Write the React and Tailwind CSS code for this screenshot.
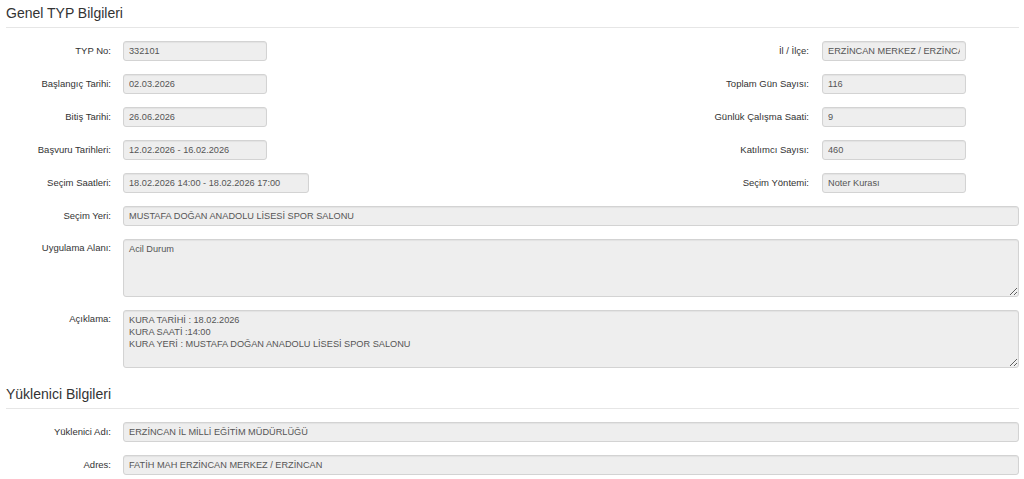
const fieldCls =
  "h-[20px] px-[5px] text-[9.2px] text-[#555] bg-[#eeeeee] border border-[#d3d3d3] rounded-[3px] outline-none shadow-[inset_0_1px_1px_rgba(0,0,0,0.05)]";

function Label({ children, wide, className = "" }) {
  return (
    <label
      className={
        (wide ? "w-[150px]" : "w-[105px]") +
        " shrink-0 text-right text-[9.5px] text-[#333] " +
        className
      }
    >
      {children}
    </label>
  );
}

function Field({ value, width }) {
  return <input readOnly value={value} className={fieldCls + " " + width} />;
}

function PairRow({ left, right }) {
  return (
    <div className="flex items-center">
      <div className="flex items-center gap-[12px]">
        <Label>{left[0]}</Label>
        <Field value={left[1]} width={left[2] || "w-[144px]"} />
      </div>
      <div className="ml-auto mr-[53px] flex items-center gap-[13px]">
        <Label wide>{right[0]}</Label>
        <Field value={right[1]} width="w-[144px]" />
      </div>
    </div>
  );
}

function FullRow({ label, value }) {
  return (
    <div className="flex items-center gap-[12px]">
      <Label>{label}</Label>
      <Field value={value} width="flex-1 min-w-0" />
    </div>
  );
}

function AreaRow({ label, value, h }) {
  return (
    <div className="flex items-start gap-[12px]">
      <Label className="pt-[2px]">{label}</Label>
      <textarea
        readOnly
        value={value}
        className={
          "flex-1 min-w-0 px-[5px] pt-[3px] text-[9.2px] leading-[12px] text-[#555] bg-[#eeeeee] border border-[#d3d3d3] rounded-[3px] outline-none resize-y shadow-[inset_0_1px_1px_rgba(0,0,0,0.05)] " +
          h
        }
      />
    </div>
  );
}

function Heading({ children }) {
  return (
    <h2 className="pt-[5px] pb-[5px] text-[14px] leading-[17px] font-normal text-[#333] border-b border-[#e6e6e6]">
      {children}
    </h2>
  );
}

export default function App() {
  return (
    <div
      className="min-h-screen bg-white pl-[6px] pr-[5px]"
      style={{ fontFamily: '"Liberation Sans", Arial, sans-serif' }}
    >
      <Heading>Genel TYP Bilgileri</Heading>

      <div className="mt-[13px] flex flex-col gap-[13px]">
        <PairRow left={["TYP No:", "332101"]} right={["İl / İlçe:", "ERZİNCAN MERKEZ / ERZİNCAN"]} />
        <PairRow left={["Başlangıç Tarihi:", "02.03.2026"]} right={["Toplam Gün Sayısı:", "116"]} />
        <PairRow left={["Bitiş Tarihi:", "26.06.2026"]} right={["Günlük Çalışma Saati:", "9"]} />
        <PairRow
          left={["Başvuru Tarihleri:", "12.02.2026 - 16.02.2026"]}
          right={["Katılımcı Sayısı:", "460"]}
        />
        <PairRow
          left={["Seçim Saatleri:", "18.02.2026 14:00 - 18.02.2026 17:00", "w-[186px]"]}
          right={["Seçim Yöntemi:", "Noter Kurası"]}
        />
        <FullRow label="Seçim Yeri:" value="MUSTAFA DOĞAN ANADOLU LİSESİ SPOR SALONU" />
        <AreaRow label="Uygulama Alanı:" value="Acil Durum" h="h-[58px]" />
        <AreaRow
          label="Açıklama:"
          value={"KURA TARİHİ : 18.02.2026\nKURA SAATİ :14:00\nKURA YERİ : MUSTAFA DOĞAN ANADOLU LİSESİ SPOR SALONU"}
          h="h-[58px]"
        />
      </div>

      <div className="mt-[13px]">
        <Heading>Yüklenici Bilgileri</Heading>
      </div>

      <div className="mt-[13px] flex flex-col gap-[13px]">
        <FullRow label="Yüklenici Adı:" value="ERZİNCAN İL MİLLİ EĞİTİM MÜDÜRLÜĞÜ" />
        <FullRow label="Adres:" value="FATİH MAH ERZİNCAN MERKEZ / ERZİNCAN" />
      </div>
    </div>
  );
}
